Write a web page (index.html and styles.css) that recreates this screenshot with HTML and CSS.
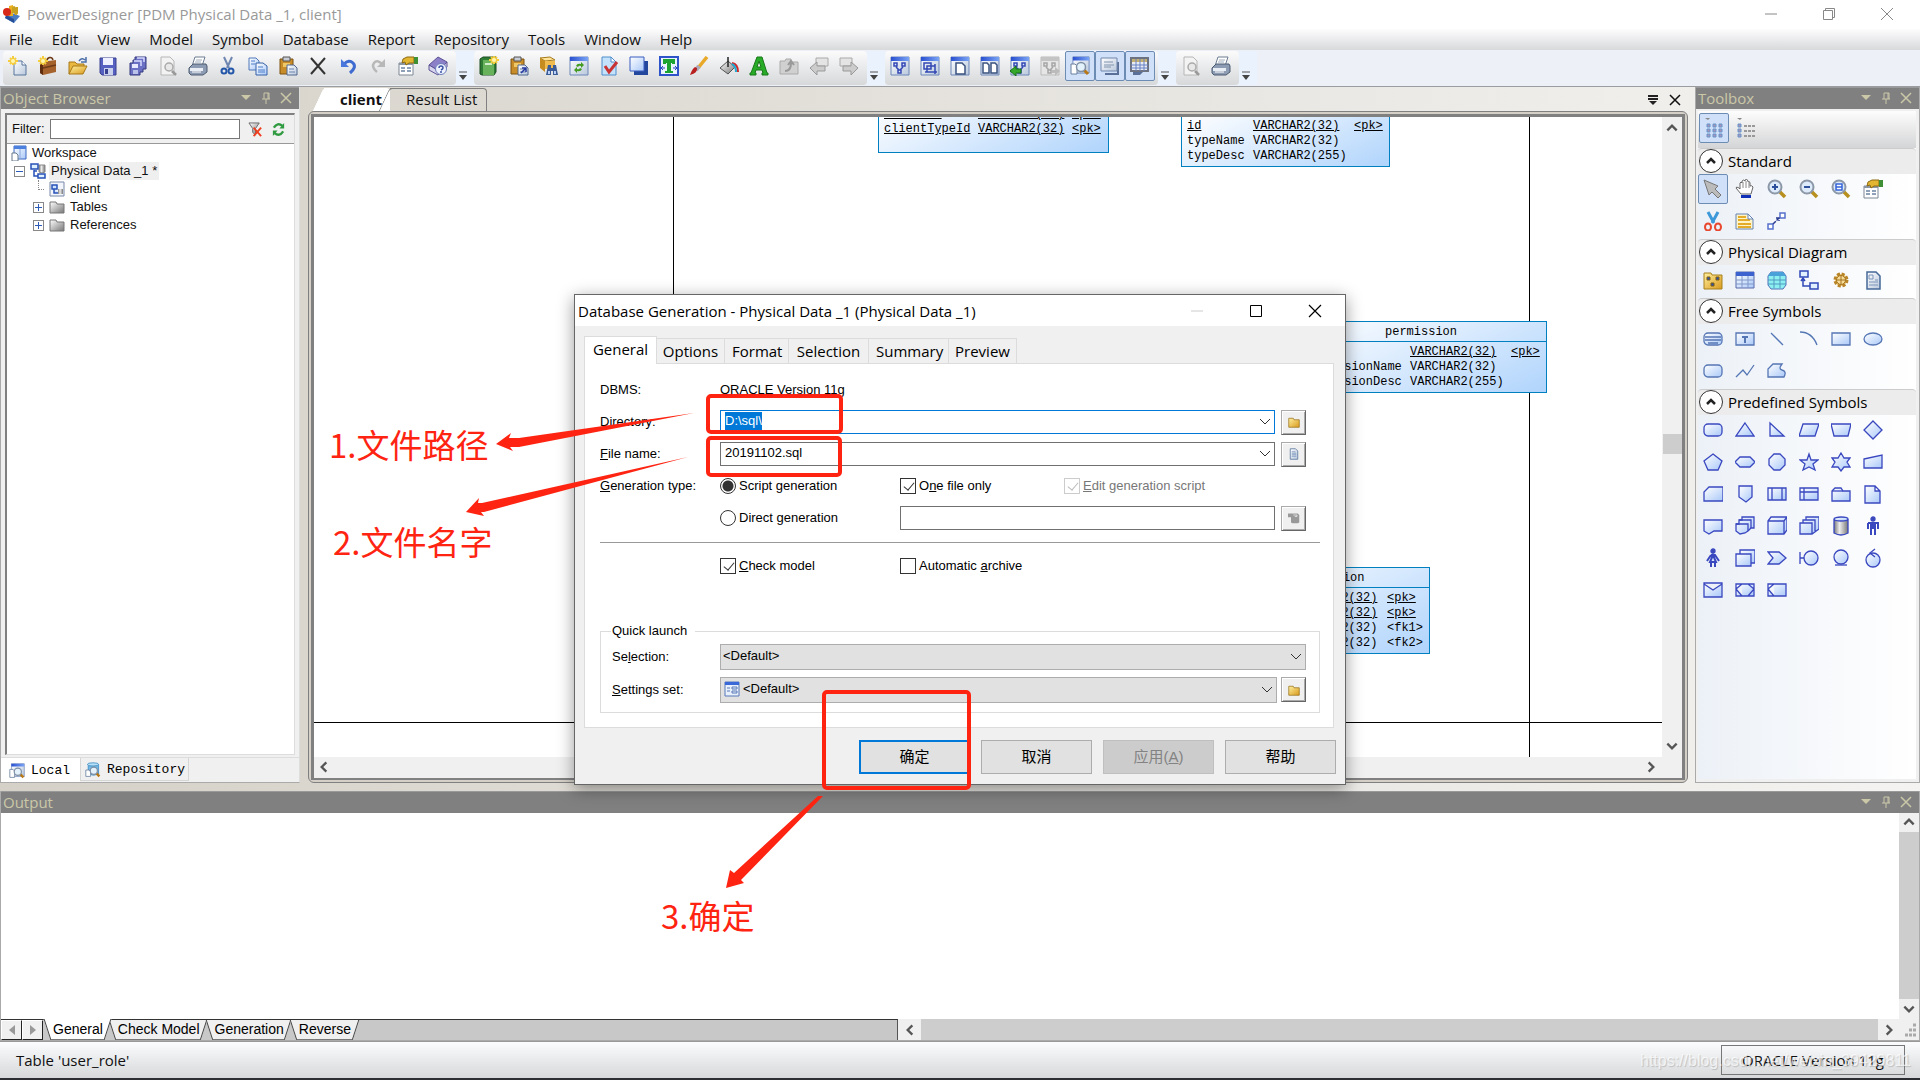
FILE: index.html
```html
<!DOCTYPE html>
<html lang="en">
<head>
<meta charset="utf-8">
<title>PowerDesigner [PDM Physical Data _1, client]</title>
<link rel="stylesheet" href="styles.css">
</head>
<body>
<svg class="sprite" aria-hidden="true">
  <defs>
    <linearGradient id="gBlue" x1="0" y1="0" x2="1" y2="1"><stop offset="0" stop-color="#fff"/><stop offset="1" stop-color="#a9c8f8"/></linearGradient>
    <linearGradient id="gPage" x1="0" y1="0" x2="1" y2="1"><stop offset="0" stop-color="#fff"/><stop offset="1" stop-color="#b9c8dc"/></linearGradient>
    <linearGradient id="gGold" x1="0" y1="0" x2="1" y2="1"><stop offset="0" stop-color="#fff0a0"/><stop offset="1" stop-color="#d99a1c"/></linearGradient>
    <linearGradient id="gGrey" x1="0" y1="0" x2="1" y2="1"><stop offset="0" stop-color="#fff"/><stop offset="1" stop-color="#777"/></linearGradient>
    <linearGradient id="gCyl" x1="0" y1="0" x2="1" y2="0"><stop offset="0" stop-color="#777"/><stop offset=".4" stop-color="#eee"/><stop offset="1" stop-color="#777"/></linearGradient>
    <linearGradient id="gBar" x1="0" y1="0" x2="1" y2="0"><stop offset="0" stop-color="#2a50d0"/><stop offset="1" stop-color="#7aa4f4"/></linearGradient>
  </defs>
  <symbol id="spark" viewBox="0 0 20 20"><path d="M5 0v9M0 5h10M2 2l6 6M8 2L2 8" stroke="#f4cc3c" stroke-width="2"/><circle cx="5" cy="5" r="2" fill="#fff6b0"/></symbol>
  <symbol id="win" viewBox="0 0 20 20"><path d="M1 1h18v18H1z" fill="url(#gPage)" stroke="#6d87b8"/><path d="M1 1h18v4H1z" fill="url(#gBar)"/></symbol>
  <symbol id="lens" viewBox="0 0 20 20"><path d="M14 14l4 4" stroke="#b87818" stroke-width="3"/><circle cx="11" cy="11" r="4.500" fill="#e4f2fc" stroke="#7f8fa5" stroke-width="1.500"/></symbol>
  <symbol id="app" viewBox="0 0 20 20"><path d="M10 9l8 3-6 7-9-5z" fill="#4c7cc0"/><path d="M3 14l9 5v-4l-8-4z" fill="#274f98"/><path d="M7 2l4-1v11H7z" fill="#e8b020"/><path d="M11 9V4q1-2 2 0v5q1 2 2 0V3" fill="none" stroke="#c8a020" stroke-width="2"/><circle cx="5" cy="8" r="4" fill="#d82818"/></symbol>
  <symbol id="new" viewBox="0 0 20 20"><path d="M6 5h8l4 4v10H6z" fill="url(#gPage)" stroke="#56749c"/><path d="M14 5v4h4" fill="#fff" stroke="#56749c"/><use href="#spark"/></symbol>
  <symbol id="case" viewBox="0 0 20 20"><path d="M2 6l16-2v12l-13 3-3-2z" fill="#a5622c"/><path d="M2 7l3 2v10l-3-2z" fill="#5f2e10"/><path d="M9 5c0-4 5-5 6-1M5 12l13-3" stroke="#6e3a18" stroke-width="1.500" fill="none"/><use href="#spark"/></symbol>
  <symbol id="open" viewBox="0 0 20 20"><path d="M1 18V6h6l2 2h7v3z" fill="#e8b840" stroke="#a87818"/><path d="M1 18l4-8h14l-4 8z" fill="url(#gGold)" stroke="#a87818"/><path d="M11 5q3-4 6-1m1-3v5h-5" stroke="#4a6ea8" stroke-width="1.500" fill="none"/></symbol>
  <symbol id="save" viewBox="0 0 20 20"><path d="M2 2h16v17H4l-2-2z" fill="#5560c0" stroke="#3a4090"/><path d="M5 2h10v7H5z" fill="#eef0ff"/><path d="M6 12h9v7H6z" fill="#c8d0ec"/><path d="M7 13h3v5H7z" fill="#3a4090"/></symbol>
  <symbol id="saveall" viewBox="0 0 20 20"><path d="M7 1h11v12h-3v3h-3v3H2V7h3V4h2z" fill="#6a70c4" stroke="#34397f"/><path d="M9 2h7v4M6 5h7v5" fill="none" stroke="#d6daff" stroke-width="1.500"/><path d="M4 8h6v4H4z" fill="#e6e8ff"/><path d="M5 14h5v4H5z" fill="#bac2ea"/></symbol>
  <symbol id="preview" viewBox="0 0 20 20"><path d="M3 1h9l4 4v14H3z" fill="#f3f3f3" stroke="#b6b6b6"/><path d="M14 15l4 4" stroke="#999" stroke-width="2.500"/><circle cx="11" cy="11" r="4" fill="#e8e8e8" stroke="#aaa" stroke-width="1.500"/></symbol>
  <symbol id="print" viewBox="0 0 20 20"><path d="M7 1h10l-3 9H4z" fill="#fff" stroke="#6c7c90"/><path d="M8 4h6M7 6h6" stroke="#a0acba"/><path d="M1 12l4-4h13l1 2v6l-4 3H3l-2-2z" fill="#8d9cb2" stroke="#4a5a70"/><path d="M2 12h13v3H2z" fill="#e9eef5"/><path d="M4 16h9" stroke="#fff"/></symbol>
  <symbol id="cut" viewBox="0 0 20 20"><path d="M6 1l5 11M14 1L9 12" stroke="#6f87b0" stroke-width="2" fill="none"/><circle cx="6" cy="15" r="2.500" fill="none" stroke="#2457a8" stroke-width="2"/><circle cx="13" cy="15" r="2.500" fill="none" stroke="#2457a8" stroke-width="2"/></symbol>
  <symbol id="copy" viewBox="0 0 20 20"><path d="M1 2h7l3 3v9H1z" fill="url(#gBlue)" stroke="#5078b8"/><path d="M8 7h7l4 3v9H8z" fill="url(#gBlue)" stroke="#3460a8"/><path d="M3 5h4M3 8h4M10 11h5M10 14h7M10 16h7" stroke="#4a7cc8"/></symbol>
  <symbol id="paste" viewBox="0 0 20 20"><path d="M2 3h13v15H2z" fill="#c88c28" stroke="#7d5310"/><path d="M5 1h7v4H5z" fill="#c8ccd4" stroke="#555"/><path d="M5 7h7v4H5z" fill="#efc868"/><path d="M9 9h7l3 3v7H9z" fill="url(#gPage)" stroke="#506890"/><path d="M11 13h5M11 16h6" stroke="#6a83b0"/></symbol>
  <symbol id="del" viewBox="0 0 20 20"><path d="M3 2l14 16M17 2L3 18" stroke="#333" stroke-width="2"/></symbol>
  <symbol id="undo" viewBox="0 0 20 20"><path d="M6 8q5-5 9-1t-3 10" fill="none" stroke="#3f6cd0" stroke-width="3"/><path d="M3 3v8h8z" fill="#4a78dc"/></symbol>
  <symbol id="redo" viewBox="0 0 20 20"><path d="M14 8Q9 3 6 7t3 9" fill="none" stroke="#b8b8b8" stroke-width="2.500"/><path d="M17 3v8H9z" fill="#b8b8b8"/></symbol>
  <symbol id="props" viewBox="0 0 20 20"><path d="M1 7h14v12H1z" fill="#fff" stroke="#7d8794"/><path d="M1 7h14v2H1z" fill="#8b97a5"/><path d="M3 12h4M3 15h4M9 12h4M9 15h4" stroke="#8fa1b8" stroke-width="2"/><path d="M5 3l4-2h7v6h-5L8 9 7 6 4 7z" fill="#e2b630" stroke="#8c6a10"/><path d="M16 1h4v7h-4z" fill="#3f8f35"/></symbol>
  <symbol id="help" viewBox="0 0 20 20"><path d="M1 9l9-8 9 5-8 9z" fill="#8c80c8" stroke="#5d5295"/><path d="M1 9v5l9 5 9-8V6l-8 9z" fill="#d7d4ee" stroke="#5d5295"/><circle cx="13" cy="13" r="5.500" fill="#eef2ff" stroke="#6d7fb8"/><path d="M11 12q0-2 2-2t2 2q0 1-2 2m0 1v2" fill="none" stroke="#3c54a4" stroke-width="1.500"/></symbol>
  <symbol id="book" viewBox="0 0 20 20"><path d="M1 3l3-2h13v15l-2 3H3l-2-1z" fill="#2f7d35" stroke="#1d4f25"/><path d="M4 4h11v15H4z" fill="#69b25c"/><path d="M6 7h7v2H6z" fill="#d0ecc8"/><svg x="10" y="-1" width="20" height="20"><use href="#spark"/></svg></symbol>
  <symbol id="pasteArrow" viewBox="0 0 20 20"><use href="#paste"/><path d="M12 17l5-5m0 4v-4h-4" stroke="#2438a0" stroke-width="1.500" fill="none"/></symbol>
  <symbol id="find" viewBox="0 0 20 20"><path d="M1 2l10-1 5 3-10 1z" fill="#ffe49a" stroke="#a67a1c"/><path d="M1 2l5 3v11l-5-4z" fill="#c68c20"/><path d="M6 5h10v8H6z" fill="#f0bc50"/><path d="M9 9h3v3h2V9h3l2 10h-5v-4h-2v4H7z" fill="#3c5c98"/><path d="M9 15h2v3H9zM15 15h2v3h-2z" fill="#b8d0f8"/></symbol>
  <symbol id="refreshWin" viewBox="0 0 20 20"><use href="#win"/><path d="M7 10q1-3 5-2V6l3 3-3 3v-2q-2-1-3 1zM13 13q-1 3-5 2v2l-3-3 3-3v2q2 1 3-1z" fill="#449b22"/></symbol>
  <symbol id="check" viewBox="0 0 20 20"><path d="M3 1h9l5 5v13H3z" fill="#c4e2fb" stroke="#4e8ecc"/><path d="M12 1v5h5z" fill="#fff" stroke="#4e8ecc"/><path d="M6 10l4 6 8-10" fill="none" stroke="#c83434" stroke-width="3"/></symbol>
  <symbol id="shadow" viewBox="0 0 20 20"><path d="M5 5h14v14H5z" fill="#23479c"/><path d="M1 1h14v14H1z" fill="url(#gBlue)" stroke="#3a5fc0"/></symbol>
  <symbol id="fitText" viewBox="0 0 20 20"><path d="M1 1h18v18H1z" fill="#eaf4ff" stroke="#2f53c8" stroke-width="2"/><path d="M4 3h12v5h-3V7h-1v8h2v2H6v-2h2V7H7v1H4z" fill="#1da332"/><path d="M2 12h4M14 12h4M4 10l-2 2 2 2M16 10l2 2-2 2" stroke="#2746c0" fill="none"/></symbol>
  <symbol id="brush" viewBox="0 0 20 20"><path d="M18 1l-9 11" stroke="#e8a828" stroke-width="3.500"/><path d="M10 10l-3 4" stroke="#aab" stroke-width="4"/><path d="M8 12q1 5-7 7 2-6 5-8z" fill="#b82020"/></symbol>
  <symbol id="bucket" viewBox="0 0 20 20"><path d="M1 12l8-7 7 6-7 7z" fill="url(#gGrey)" stroke="#555"/><path d="M9 11V1" stroke="#222" stroke-width="1.500"/><path d="M13 7q6 1 6 9" stroke="#d02828" stroke-width="2" fill="none"/><path d="M13 8q4 2 4 8" stroke="#20a8d0" stroke-width="2" fill="none"/></symbol>
  <symbol id="fontA" viewBox="0 0 20 20"><path d="M8 1h5l5 16h1v2h-6v-2h1l-1-3H7l-1 3h1v2H1v-2h1zM10 5l-2 6h4z" fill="#28ac28" stroke="#187818" fill-rule="evenodd"/></symbol>
  <symbol id="upFolder" viewBox="0 0 20 20"><path d="M1 5h5l1-2h5v3h7v12H1z" fill="#d0d0d0" stroke="#aaa"/><path d="M6 15q6 0 6-8m-3 2l3-4 3 4" fill="none" stroke="#999" stroke-width="2"/></symbol>
  <symbol id="backG" viewBox="0 0 20 20"><path d="M7 2h12v8H7z" fill="#e4e4e4" stroke="#aaa"/><path d="M1 12l7-6v4h8v5H8v4z" fill="#ccc" stroke="#999"/></symbol>
  <symbol id="fwdG" viewBox="0 0 20 20"><path d="M1 2h12v8H1z" fill="#e4e4e4" stroke="#aaa"/><path d="M19 12l-7-6v4H4v5h8v4z" fill="#ccc" stroke="#999"/></symbol>
  <symbol id="dgm" viewBox="0 0 20 20"><use href="#win"/><path d="M4 7h3v3H4zM12 7h3v3h-3zM8 14h3v3H8zM6 11l3 3M13 11l-3 3" fill="#dce6ff" stroke="#3348b4" stroke-width="1.500"/></symbol>
  <symbol id="sel" viewBox="0 0 20 20"><use href="#win"/><path d="M4 7h7v6H4zM7 10h8v6H7zM5 16h12M15 8v10" fill="none" stroke="#3348b4" stroke-width="1.500"/></symbol>
  <symbol id="page1" viewBox="0 0 20 20"><use href="#win"/><path d="M6 7h6l3 3v8H6z" fill="#fff" stroke="#3b5380" stroke-width="1.500"/></symbol>
  <symbol id="page2" viewBox="0 0 20 20"><use href="#win"/><path d="M3 7h4l2 2v8H3zM11 7h4l2 2v8h-6z" fill="#fff" stroke="#3b5380" stroke-width="1.500"/></symbol>
  <symbol id="dgmBack" viewBox="0 0 20 20"><use href="#dgm"/><path d="M0 15l6-5v3h5v4H6v3z" fill="#35a82c" stroke="#167018"/></symbol>
  <symbol id="dgmFwd" viewBox="0 0 20 20"><path d="M1 1h18v18H1z" fill="#e6e6e6" stroke="#bbb"/><path d="M1 1h18v4H1z" fill="#c4c4c4"/><path d="M4 7h3v3H4zM12 7h3v3h-3zM8 14h3v3H8zM6 11l3 3M13 11l-3 3" fill="none" stroke="#a5a5a5" stroke-width="1.500"/><path d="M20 15l-5-4v3h-3v3h3v3z" fill="#bbb"/></symbol>
  <symbol id="browse" viewBox="0 0 20 20"><svg x="2" width="18" height="18"><use href="#win"/></svg><path d="M1 8h4l2 2v8H1z" fill="#fff" stroke="#6880a0"/><use href="#lens"/></symbol>
  <symbol id="outwin" viewBox="0 0 20 20"><path d="M5 17h12V6h2v13H5z" fill="#5a7098"/><path d="M1 2h16v13H1z" fill="url(#gPage)" stroke="#7087ac"/><path d="M4 6h9M4 9h10M4 11h7" stroke="#8294ae"/></symbol>
  <symbol id="gridwin" viewBox="0 0 20 20"><path d="M3 16h10l-3 3H3z" fill="#5a7098"/><path d="M1 2h17v13H1z" fill="#e8ecf2" stroke="#6c7280" stroke-width="2"/><path d="M2 3h15v3H2z" fill="#c4b070"/><path d="M1 9h17M1 12h17M6 3v12M10 3v12M14 3v12" stroke="#6780c8"/></symbol>
  <symbol id="ovf" viewBox="0 0 10 10"><path d="M1 1h8" stroke="#555"/><path d="M1 4h8L5 9z" fill="#444"/></symbol>
  <symbol id="tri" viewBox="0 0 12 12"><path d="M1 3h10L6 8z" fill="currentColor"/></symbol>
  <symbol id="pin" viewBox="0 0 12 12"><path d="M4 1h5v6M4 1v6M2 7h8M6 7v5M8 1v6" fill="none" stroke="currentColor"/></symbol>
  <symbol id="x" viewBox="0 0 12 12"><path d="M1 1l10 10M11 1L1 11" stroke="currentColor" stroke-width="1.500"/></symbol>
  <symbol id="up" viewBox="0 0 12 12"><path d="M2 8l4-4 4 4" fill="none" stroke="currentColor" stroke-width="2"/></symbol>
  <symbol id="down" viewBox="0 0 12 12"><path d="M2 4l4 4 4-4" fill="none" stroke="currentColor" stroke-width="2"/></symbol>
  <symbol id="drop" viewBox="0 0 12 12"><path d="M1 4l5 5 5-5" fill="none" stroke="currentColor"/></symbol>
  <symbol id="left" viewBox="0 0 12 12"><path d="M8 2L4 6l4 4" fill="none" stroke="currentColor" stroke-width="2"/></symbol>
  <symbol id="right" viewBox="0 0 12 12"><path d="M4 2l4 4-4 4" fill="none" stroke="currentColor" stroke-width="2"/></symbol>
  <symbol id="nofilter" viewBox="0 0 16 16"><path d="M1 1h11L8 7v7l-3-3V7z" fill="url(#gGrey)" stroke="#666"/><path d="M6 6l8 9M14 6l-8 9" stroke="#ee4020" stroke-width="2"/></symbol>
  <symbol id="refresh" viewBox="0 0 16 16"><path d="M3 6q4-6 9-2M13 10q-4 6-9 2" fill="none" stroke="#2f9a40" stroke-width="2.500"/><path d="M14 1v6H9zM2 15V9h5z" fill="#2f9a40"/></symbol>
  <symbol id="workspace" viewBox="0 0 16 16"><path d="M3 1h12v13H3z" fill="url(#gBlue)" stroke="#3a68c0"/><path d="M3 1h12v3H3z" fill="#4b80de"/><path d="M9 4v10" stroke="#88a8dc"/><path d="M1 8h4l2 2v6H1z" fill="#fff" stroke="#66788c"/></symbol>
  <symbol id="pdm" viewBox="0 0 16 16"><path d="M9 2v7q3 2 6 0V2z" fill="url(#gCyl)" stroke="#888"/><path d="M1 1h7v5H1zM8 11h7v4H8z" fill="#dff0ff" stroke="#2750b8" stroke-width="1.500"/><path d="M4 7v6h4M4 8h3" fill="none" stroke="#2750b8" stroke-width="1.500"/></symbol>
  <symbol id="dgmSmall" viewBox="0 0 16 16"><path d="M1 1h14v14H1z" fill="#f2f6fc" stroke="#7888a8"/><path d="M3 4h5v4H3zM5 8v4h5" fill="#cfe2ff" stroke="#2750b8" stroke-width="1.500"/><path d="M9 8h5v5H9z" fill="url(#gCyl)"/></symbol>
  <symbol id="folderG" viewBox="0 0 16 16"><path d="M1 3h6l1 2h7v9H1z" fill="url(#gGrey)" stroke="#777"/></symbol>
  <symbol id="repo" viewBox="0 0 20 20"><path d="M4 3v12q7 3 13 0V3z" fill="#6fb8e4" stroke="#3c88c0"/><ellipse cx="10" cy="3" rx="7" ry="2" fill="#b6e0f8" stroke="#3c88c0"/><path d="M1 10h4l2 2v6H1z" fill="#fff" stroke="#6880a0"/><use href="#lens"/></symbol>
  <symbol id="folderY" viewBox="0 0 16 16"><path d="M1 3h6l1 2h7v10H1z" fill="url(#gGold)" stroke="#95701c"/></symbol>
  <symbol id="docS" viewBox="0 0 16 16"><path d="M3 1h7l3 3v11H3z" fill="url(#gPage)" stroke="#4c6b96"/><path d="M5 5h5M5 7h6M5 9h6M5 11h6" stroke="#6f8db8"/></symbol>
  <symbol id="dbG" viewBox="0 0 16 16"><path d="M0 2h13l2 2v10l-2 1H6l-2-1V7H0z" fill="#999"/><path d="M7 4h5v2H9" fill="none" stroke="#eee"/></symbol>
  <symbol id="viewGrid" viewBox="0 0 20 20"><path d="M1 0h5L4 2z" fill="#888"/><path d="M3 6h3v3H3zM9 6h3v3H9zM15 6h3v3h-3zM3 11h3v3H3zM9 11h3v3H9zM15 11h3v3h-3zM3 16h3v3H3zM9 16h3v3H9zM15 16h3v3h-3z" fill="#a993b8" stroke="#6696cc"/></symbol>
  <symbol id="viewList" viewBox="0 0 20 20"><path d="M1 0h5L4 2z" fill="#888"/><path d="M2 6h3v3H2zM2 11h3v3H2zM2 16h3v3H2z" fill="#a993b8" stroke="#6696cc"/><path d="M8 8h12M8 13h12M8 18h12" stroke="#999" stroke-dasharray="3 1" stroke-width="2"/></symbol>
  <symbol id="chev" viewBox="0 0 24 24"><circle cx="12" cy="12" r="11.500" fill="#fff" stroke="#333"/><path d="M8 14l4-4 4 4" fill="none" stroke="#222" stroke-width="2.500"/></symbol>
  <symbol id="pointer" viewBox="0 0 20 20"><path d="M1 1l14 6-3 3 6 6-3 3-6-6-3 3z" fill="#bbb" stroke="#777"/></symbol>
  <symbol id="hand" viewBox="0 0 20 20"><path d="M6 15l-5-6q0-2 3 0l1 1V4q1-2 2 0V2q2-2 3 0V1q2-2 3 1v1q2-1 2 1v3q2-1 3 1l-2 7z" fill="#fff" stroke="#666"/><path d="M8 3v6M11 2v7M14 4v5" stroke="#888"/><path d="M6 16h10v3H6z" fill="#1030b8"/></symbol>
  <symbol id="zoom" viewBox="0 0 20 20"><path d="M12 12l6 6" stroke="#b89020" stroke-width="3.500"/><circle cx="8" cy="8" r="6.500" fill="#dceafa" stroke="#8c98a8" stroke-width="2"/></symbol>
  <symbol id="zin" viewBox="0 0 20 20"><use href="#zoom"/><path d="M5 8h6M8 5v6" stroke="#2c509c" stroke-width="2"/></symbol>
  <symbol id="zout" viewBox="0 0 20 20"><use href="#zoom"/><path d="M5 8h6" stroke="#2c509c" stroke-width="2"/></symbol>
  <symbol id="zfit" viewBox="0 0 20 20"><use href="#zoom"/><path d="M5 5h6v6H5zM5 8h6" fill="#fff" stroke="#3464d8" stroke-width="1.500"/></symbol>
  <symbol id="cutc" viewBox="0 0 20 20"><path d="M5 1l6 11M15 1L9 12" stroke="#3c98d8" stroke-width="3"/><ellipse cx="5" cy="16" rx="3" ry="3.500" fill="none" stroke="#e84830" stroke-width="2"/><ellipse cx="15" cy="16" rx="3" ry="3.500" fill="none" stroke="#e84830" stroke-width="2"/></symbol>
  <symbol id="note" viewBox="0 0 20 20"><path d="M1 3h12l5 5v10H1z" fill="#fff4c8" stroke="#6482b4"/><path d="M3 6h8M3 9h12M3 13h13M3 16h13" stroke="#e4ac28" stroke-width="2"/><path d="M13 3v5h5z" fill="#fff" stroke="#6482b4"/></symbol>
  <symbol id="link" viewBox="0 0 20 20"><path d="M1 13h5v5H1zM13 2h5v5h-5z" fill="#fff" stroke="#5570cc" stroke-width="1.500"/><path d="M6 13l6-6M9 7h3v3" stroke="#2c3c90" stroke-width="1.500" fill="none" stroke-dasharray="4 1"/></symbol>
  <symbol id="pkg" viewBox="0 0 20 20"><path d="M1 3h7l1 2h10v14H1z" fill="url(#gGold)" stroke="#a8801c"/><path d="M4 7h3v3H4zM13 7h3v3h-3zM8 13h3v3H8z" fill="#2850b8" stroke="#806010"/></symbol>
  <symbol id="tbl" viewBox="0 0 20 20"><path d="M1 2h18v16H1z" fill="url(#gBlue)" stroke="#5868a8"/><path d="M1 2h18v4H1z" fill="#3c62d0"/><path d="M1 10h18M1 14h18M7 6v12M13 6v12" stroke="#8098c8"/></symbol>
  <symbol id="view" viewBox="0 0 20 20"><path d="M4 2h12l3 4v9l-3 4H4l-3-4V6z" fill="#8cf0f0" stroke="#5070b8"/><path d="M4 2h12l3 4H1z" fill="#4aa0d8"/><path d="M1 10h18M1 14h18M7 6v12M13 6v12" stroke="#5098c0"/></symbol>
  <symbol id="ref" viewBox="0 0 20 20"><path d="M1 1h8v6H1zM11 13h8v6h-8z" fill="#e0f0ff" stroke="#3048b8" stroke-width="1.500"/><path d="M4 8v8h7M2 11l2-3 2 3" stroke="#3048b8" stroke-width="1.500" fill="none"/></symbol>
  <symbol id="gear" viewBox="0 0 20 20"><circle cx="10" cy="10" r="6" fill="#f0c468" stroke="#b88428" stroke-width="3" stroke-dasharray="3 1.700"/><circle cx="10" cy="10" r="4.500" fill="#f8dc98" stroke="#a47420"/><path d="M10 6v8M6 10h8" stroke="#a47420"/></symbol>
  <symbol id="file" viewBox="0 0 20 20"><path d="M4 2h9l4 4v13H4z" fill="url(#gPage)" stroke="#456898" stroke-width="1.500"/><path d="M6 5h4v4H6zM12 10h3M6 12h9M6 15h9" stroke="#7c94b8" fill="none"/></symbol>
  <symbol id="title" viewBox="0 0 20 20"><rect x="1" y="4" width="18" height="12" rx="4"/><path d="M2 8h16M2 11h16M5 14h10"/></symbol>
  <symbol id="textb" viewBox="0 0 20 20"><path d="M1 4h18v12H1z"/><path d="M7 8h6M10 8v6" stroke-width="2"/></symbol>
  <symbol id="line" viewBox="0 0 20 20"><path d="M4 4l12 12"/></symbol>
  <symbol id="arc" viewBox="0 0 20 20"><path d="M1 3q12 0 17 13" fill="none"/></symbol>
  <symbol id="rect" viewBox="0 0 20 20"><path d="M1 4h18v12H1z"/></symbol>
  <symbol id="oval" viewBox="0 0 20 20"><ellipse cx="10" cy="10" rx="9" ry="6"/></symbol>
  <symbol id="rrect" viewBox="0 0 20 20"><rect x="1" y="4" width="18" height="12" rx="4"/></symbol>
  <symbol id="poly" viewBox="0 0 20 20"><path d="M1 16l7-7 4 5 7-10" fill="none"/></symbol>
  <symbol id="shape" viewBox="0 0 20 20"><path d="M1 16V8l5-5h9q-4 5 0 6 5 1 2 7z"/></symbol>
  <symbol id="triS" viewBox="0 0 20 20"><path d="M10 3l9 13H1z"/></symbol>
  <symbol id="rtri" viewBox="0 0 20 20"><path d="M3 3l14 13H3z"/></symbol>
  <symbol id="para" viewBox="0 0 20 20"><path d="M4 4h16l-4 12H0z"/></symbol>
  <symbol id="trap" viewBox="0 0 20 20"><path d="M0 4h20l-3 12H3z"/></symbol>
  <symbol id="diam" viewBox="0 0 20 20"><path d="M10 1l9 9-9 9-9-9z"/></symbol>
  <symbol id="pent" viewBox="0 0 20 20"><path d="M10 2l9 7-4 9H5L1 9z"/></symbol>
  <symbol id="hex" viewBox="0 0 20 20"><path d="M0 10l5-5h10l5 5-5 5H5z"/></symbol>
  <symbol id="oct" viewBox="0 0 20 20"><path d="M7 2h6l5 5v6l-5 5H7l-5-5V7z"/></symbol>
  <symbol id="star5" viewBox="0 0 20 20"><path d="M10 2l2 6h7l-5 4 2 6-6-3-6 3 2-6-5-4h7z"/></symbol>
  <symbol id="star6" viewBox="0 0 20 20"><path d="M10 1l3 5h6l-3 4 3 5h-6l-3 4-3-4H1l3-5-3-4h6z"/></symbol>
  <symbol id="manual" viewBox="0 0 20 20"><path d="M1 7l18-4v13H1z"/></symbol>
  <symbol id="card" viewBox="0 0 20 20"><path d="M6 3h14v14H1V8z"/></symbol>
  <symbol id="offp" viewBox="0 0 20 20"><path d="M4 2h13v11l-6 5-7-5z"/></symbol>
  <symbol id="proc" viewBox="0 0 20 20"><path d="M1 4h18v12H1zM5 4v12M15 4v12"/></symbol>
  <symbol id="intern" viewBox="0 0 20 20"><path d="M1 4h18v12H1zM1 8h18M5 4v12"/></symbol>
  <symbol id="pack" viewBox="0 0 20 20"><path d="M1 7l3-3h6l2 3h7v10H1z"/><path d="M1 7h11" /></symbol>
  <symbol id="doc" viewBox="0 0 20 20"><path d="M2 2h10l5 5v12H2zM12 2v5h5"/></symbol>
  <symbol id="wave" viewBox="0 0 20 20"><path d="M1 4h18v11h-8l-5 3-5-3z"/></symbol>
  <symbol id="waves" viewBox="0 0 20 20"><path d="M7 1h12v11h-3l-3 3-3 2-5 1-4-3V8h3V4h3z"/><path d="M1 8h12v7M4 4h12v8" fill="none"/></symbol>
  <symbol id="cube" viewBox="0 0 20 20"><path d="M1 5l3-4h16v13l-3 4H1zM1 5h16v13M17 5l3-4"/></symbol>
  <symbol id="cubes" viewBox="0 0 20 20"><path d="M7 1h13v12l-7 5H1V7h3V4h3zM1 7h12v11M4 4h12v11"/></symbol>
  <symbol id="cyl" viewBox="0 0 20 20"><path d="M3 4v13q7 4 14 0V4z" fill="url(#gCyl)"/><ellipse cx="10" cy="3" rx="7" ry="2"/></symbol>
  <symbol id="man" viewBox="0 0 20 20"><circle cx="10" cy="3" r="2" fill="#3a48b8"/><path d="M5 7h10v6M5 7v6M8 7v12M12 7v12M10 7v6" fill="none" stroke-width="2"/></symbol>
  <symbol id="woman" viewBox="0 0 20 20"><circle cx="10" cy="3" r="2" fill="#3a48b8"/><path d="M8 7h4l4 6M8 7l-4 6M10 7l-3 7h6zM8 14v5M12 14v5" stroke-width="2"/></symbol>
  <symbol id="multi" viewBox="0 0 20 20"><path d="M5 2h15v13H5z"/><path d="M1 6h15v12H1z"/></symbol>
  <symbol id="chevS" viewBox="0 0 20 20"><path d="M1 4h11l7 6-7 6H1l5-6z"/></symbol>
  <symbol id="bound" viewBox="0 0 20 20"><path d="M1 4v12M1 10h5"/><circle cx="12" cy="10" r="7"/></symbol>
  <symbol id="entity" viewBox="0 0 20 20"><circle cx="10" cy="9" r="7"/><path d="M4 17h12"/></symbol>
  <symbol id="ctrl" viewBox="0 0 20 20"><circle cx="10" cy="12" r="7"/><path d="M12 1L7 5l5 4" fill="none"/></symbol>
  <symbol id="mail" viewBox="0 0 20 20"><path d="M1 3h18v14H1zM1 4l9 6 9-6"/></symbol>
  <symbol id="mail2" viewBox="0 0 20 20"><path d="M1 4h18v12H1zM7 4l-6 5 6 7M13 4l6 5-6 7"/></symbol>
  <symbol id="mail3" viewBox="0 0 20 20"><path d="M1 4h18v12H1zM7 4l-6 5 6 7"/></symbol>
</svg>

<header class="titlebar">
  <svg class="i20"><use href="#app"/></svg>
  <h1>PowerDesigner [PDM Physical Data _1, client]</h1>
  <div class="winbtns">
    <button aria-label="Minimize"><svg viewBox="0 0 12 12"><path d="M0 6h12" stroke="#888"/></svg></button>
    <button aria-label="Restore"><svg viewBox="0 0 12 12"><path d="M.5 2.500h9v9h-9zM2.500 2V.5h9v9H10" fill="none" stroke="#888"/></svg></button>
    <button aria-label="Close"><svg viewBox="0 0 12 12"><path d="M0 0l12 12M12 0L0 12" stroke="#888"/></svg></button>
  </div>
</header>
<nav class="menubar">
  <button>File</button><button>Edit</button><button>View</button><button>Model</button><button>Symbol</button><button>Database</button><button>Report</button><button>Repository</button><button>Tools</button><button>Window</button><button>Help</button>
</nav>
<div class="toolbar">
  <div class="group">
    <button aria-label="New"><svg><use href="#new"/></svg></button><button aria-label="New project"><svg><use href="#case"/></svg></button><button aria-label="Open"><svg><use href="#open"/></svg></button><button aria-label="Save"><svg><use href="#save"/></svg></button><button aria-label="Save all"><svg><use href="#saveall"/></svg></button><button aria-label="Print preview"><svg><use href="#preview"/></svg></button><button aria-label="Print"><svg><use href="#print"/></svg></button><button aria-label="Cut"><svg><use href="#cut"/></svg></button><button aria-label="Copy"><svg><use href="#copy"/></svg></button><button aria-label="Paste"><svg><use href="#paste"/></svg></button><button aria-label="Delete"><svg><use href="#del"/></svg></button><button aria-label="Undo"><svg><use href="#undo"/></svg></button><button aria-label="Redo"><svg><use href="#redo"/></svg></button><button aria-label="Properties"><svg><use href="#props"/></svg></button><button aria-label="Help"><svg><use href="#help"/></svg></button>
  </div>
  <button class="ovf" aria-label="More"><svg><use href="#ovf"/></svg></button>
  <div class="group">
    <button aria-label="New model"><svg><use href="#book"/></svg></button><button aria-label="Paste as shortcut"><svg><use href="#pasteArrow"/></svg></button><button aria-label="Find objects"><svg><use href="#find"/></svg></button><button aria-label="Refresh"><svg><use href="#refreshWin"/></svg></button><button aria-label="Check model"><svg><use href="#check"/></svg></button><button aria-label="Shadow"><svg><use href="#shadow"/></svg></button><button aria-label="Fit to text"><svg><use href="#fitText"/></svg></button><button aria-label="Line style"><svg><use href="#brush"/></svg></button><button aria-label="Fill"><svg><use href="#bucket"/></svg></button><button aria-label="Font"><svg><use href="#fontA"/></svg></button><button aria-label="Parent"><svg><use href="#upFolder"/></svg></button><button aria-label="Back"><svg><use href="#backG"/></svg></button><button aria-label="Forward"><svg><use href="#fwdG"/></svg></button>
  </div>
  <button class="ovf" aria-label="More"><svg><use href="#ovf"/></svg></button>
  <div class="group">
    <button aria-label="Diagram"><svg><use href="#dgm"/></svg></button><button aria-label="Select"><svg><use href="#sel"/></svg></button><button aria-label="One page"><svg><use href="#page1"/></svg></button><button aria-label="All pages"><svg><use href="#page2"/></svg></button><button aria-label="Previous view"><svg><use href="#dgmBack"/></svg></button><button aria-label="Next view"><svg><use href="#dgmFwd"/></svg></button><button class="on" aria-label="Browser"><svg><use href="#browse"/></svg></button><button class="on" aria-label="Output"><svg><use href="#outwin"/></svg></button><button class="on" aria-label="Result list"><svg><use href="#gridwin"/></svg></button>
  </div>
  <button class="ovf" aria-label="More"><svg><use href="#ovf"/></svg></button>
  <div class="group">
    <button aria-label="Page preview"><svg><use href="#preview"/></svg></button><button aria-label="Print diagram"><svg><use href="#print"/></svg></button>
  </div>
  <button class="ovf" aria-label="More"><svg><use href="#ovf"/></svg></button>
</div>

<main class="workspace">
  <aside class="pane browser">
    <div class="panehead"><h2>Object Browser</h2><svg><use href="#tri"/></svg><svg><use href="#pin"/></svg><svg><use href="#x"/></svg></div>
    <div class="treebox">
      <div class="filter"><label for="filter">Filter:</label><input id="filter" type="text"><svg><use href="#nofilter"/></svg><svg><use href="#refresh"/></svg></div>
      <ul class="tree">
        <li class="l0"><svg><use href="#workspace"/></svg><span>Workspace</span></li>
        <li class="l1"><i class="box minus"></i><svg><use href="#pdm"/></svg><span class="cur">Physical Data _1 *</span></li>
        <li class="l2"><i class="stub"></i><svg><use href="#dgmSmall"/></svg><span>client</span></li>
        <li class="l2"><i class="box plus"></i><svg><use href="#folderG"/></svg><span>Tables</span></li>
        <li class="l2"><i class="box plus"></i><svg><use href="#folderG"/></svg><span>References</span></li>
      </ul>
    </div>
    <div class="lefttabs"><button class="act"><svg><use href="#browse"/></svg>Local</button><button><svg><use href="#repo"/></svg>Repository</button></div>
  </aside>

  <section class="docarea">
    <div class="doctabs">
      <button class="doctab act">client</button><button class="doctab">Result List</button>
      <span class="grow"></span>
      <svg viewBox="0 0 12 12"><path d="M1 2h10M1 5h10" stroke="#222" stroke-width="2"/><path d="M2 7h8l-4 4z" fill="#222"/></svg>
      <svg><use href="#x"/></svg>
    </div>
    <div class="frame"><div class="frame-in">
      <div class="canvas">
        <div class="vline v1"></div><div class="vline v2"></div><div class="hline"></div>
        <div class="entity e1"><table><colgroup><col class="c94"><col class="c94"><col></colgroup><tr><td><u>clientId</u></td><td><u>VARCHAR2(32)</u></td><td><u>&lt;pk&gt;</u></td></tr><tr><td><u>clientTypeId</u></td><td><u>VARCHAR2(32)</u></td><td><u>&lt;pk&gt;</u></td></tr></table></div>
        <div class="entity e2"><table><colgroup><col class="c66"><col class="c101"><col></colgroup><tr><td><u>id</u></td><td><u>VARCHAR2(32)</u></td><td><u>&lt;pk&gt;</u></td></tr><tr><td>typeName</td><td>VARCHAR2(32)</td><td></td></tr><tr><td>typeDesc</td><td>VARCHAR2(255)</td><td></td></tr></table></div>
        <div class="entity e3"><h3>permission</h3><table><colgroup><col class="c109"><col class="c101"><col></colgroup><tr><td><u>id</u></td><td><u>VARCHAR2(32)</u></td><td><u>&lt;pk&gt;</u></td></tr><tr><td>permissionName</td><td>VARCHAR2(32)</td><td></td></tr><tr><td>permissionDesc</td><td>VARCHAR2(255)</td><td></td></tr></table></div>
        <div class="entity e4"><h3>role_permission</h3><table><colgroup><col class="c94"><col class="c96"><col></colgroup><tr><td><u>roleId</u></td><td><u>VARCHAR2(32)</u></td><td><u>&lt;pk&gt;</u></td></tr><tr><td><u>permissionId</u></td><td><u>VARCHAR2(32)</u></td><td><u>&lt;pk&gt;</u></td></tr><tr><td>rol_id</td><td>VARCHAR2(32)</td><td>&lt;fk1&gt;</td></tr><tr><td>per_id</td><td>VARCHAR2(32)</td><td>&lt;fk2&gt;</td></tr></table></div>
      </div>
      <div class="vscroll"><svg><use href="#up"/></svg><span class="thumb"></span><svg><use href="#down"/></svg></div>
      <div class="hscroll"><svg><use href="#left"/></svg><svg><use href="#right"/></svg></div>
    </div></div>
  </section>

  <aside class="pane toolbox">
    <div class="panehead"><h2>Toolbox</h2><svg><use href="#tri"/></svg><svg><use href="#pin"/></svg><svg><use href="#x"/></svg></div>
    <div class="tools">
      <div class="modes"><button class="on" aria-label="Icons"><svg><use href="#viewGrid"/></svg></button><button aria-label="List"><svg><use href="#viewList"/></svg></button></div>
      <h3><svg><use href="#chev"/></svg>Standard</h3>
      <div class="pal"><button class="on" aria-label="Pointer"><svg><use href="#pointer"/></svg></button><button aria-label="Grabber"><svg><use href="#hand"/></svg></button><button aria-label="Zoom in"><svg><use href="#zin"/></svg></button><button aria-label="Zoom out"><svg><use href="#zout"/></svg></button><button aria-label="Open diagram"><svg><use href="#zfit"/></svg></button><button aria-label="Properties"><svg><use href="#props"/></svg></button><button aria-label="Delete"><svg><use href="#cutc"/></svg></button><button aria-label="Note"><svg><use href="#note"/></svg></button><button aria-label="Link"><svg><use href="#link"/></svg></button></div>
      <h3><svg><use href="#chev"/></svg>Physical Diagram</h3>
      <div class="pal"><button aria-label="Package"><svg><use href="#pkg"/></svg></button><button aria-label="Table"><svg><use href="#tbl"/></svg></button><button aria-label="View"><svg><use href="#view"/></svg></button><button aria-label="Reference"><svg><use href="#ref"/></svg></button><button aria-label="Procedure"><svg><use href="#gear"/></svg></button><button aria-label="File"><svg><use href="#file"/></svg></button></div>
      <h3><svg><use href="#chev"/></svg>Free Symbols</h3>
      <div class="pal sym free"><button aria-label="Title"><svg><use href="#title"/></svg></button><button aria-label="Text"><svg><use href="#textb"/></svg></button><button aria-label="Line"><svg><use href="#line"/></svg></button><button aria-label="Arc"><svg><use href="#arc"/></svg></button><button aria-label="Rectangle"><svg><use href="#rect"/></svg></button><button aria-label="Ellipse"><svg><use href="#oval"/></svg></button><button aria-label="Rounded rectangle"><svg><use href="#rrect"/></svg></button><button aria-label="Polyline"><svg><use href="#poly"/></svg></button><button aria-label="Polygon"><svg><use href="#shape"/></svg></button></div>
      <h3><svg><use href="#chev"/></svg>Predefined Symbols</h3>
      <div class="pal sym"><button aria-label="Rounded"><svg><use href="#rrect"/></svg></button><button aria-label="Triangle"><svg><use href="#triS"/></svg></button><button aria-label="Right triangle"><svg><use href="#rtri"/></svg></button><button aria-label="Parallelogram"><svg><use href="#para"/></svg></button><button aria-label="Trapezoid"><svg><use href="#trap"/></svg></button><button aria-label="Diamond"><svg><use href="#diam"/></svg></button><button aria-label="Pentagon"><svg><use href="#pent"/></svg></button><button aria-label="Hexagon"><svg><use href="#hex"/></svg></button><button aria-label="Octagon"><svg><use href="#oct"/></svg></button><button aria-label="Star"><svg><use href="#star5"/></svg></button><button aria-label="Six-point star"><svg><use href="#star6"/></svg></button><button aria-label="Manual input"><svg><use href="#manual"/></svg></button><button aria-label="Card"><svg><use href="#card"/></svg></button><button aria-label="Off-page"><svg><use href="#offp"/></svg></button><button aria-label="Process"><svg><use href="#proc"/></svg></button><button aria-label="Internal storage"><svg><use href="#intern"/></svg></button><button aria-label="Package"><svg><use href="#pack"/></svg></button><button aria-label="Page"><svg><use href="#doc"/></svg></button><button aria-label="Document"><svg><use href="#wave"/></svg></button><button aria-label="Documents"><svg><use href="#waves"/></svg></button><button aria-label="Cube"><svg><use href="#cube"/></svg></button><button aria-label="Cubes"><svg><use href="#cubes"/></svg></button><button aria-label="Cylinder"><svg><use href="#cyl"/></svg></button><button aria-label="Man"><svg><use href="#man"/></svg></button><button aria-label="Woman"><svg><use href="#woman"/></svg></button><button aria-label="Multiple"><svg><use href="#multi"/></svg></button><button aria-label="Chevron"><svg><use href="#chevS"/></svg></button><button aria-label="Boundary"><svg><use href="#bound"/></svg></button><button aria-label="Entity"><svg><use href="#entity"/></svg></button><button aria-label="Control"><svg><use href="#ctrl"/></svg></button><button aria-label="Mail"><svg><use href="#mail"/></svg></button><button aria-label="Message in and out"><svg><use href="#mail2"/></svg></button><button aria-label="Message"><svg><use href="#mail3"/></svg></button></div>
    </div>
  </aside>
</main>

<section class="output">
  <div class="panehead"><h2>Output</h2><svg><use href="#tri"/></svg><svg><use href="#pin"/></svg><svg><use href="#x"/></svg></div>
  <div class="outbody"><div class="outtext"></div><div class="vscroll full"><svg><use href="#up"/></svg><span class="thumb"></span><svg><use href="#down"/></svg></div></div>
  <div class="outfoot">
    <div class="outtabs">
      <button class="nav" aria-label="Previous tab"><svg viewBox="0 0 12 12"><path d="M9 1v10L3 6z" fill="#999"/></svg></button><button class="nav" aria-label="Next tab"><svg viewBox="0 0 12 12"><path d="M3 1v10l6-5z" fill="#999"/></svg></button>
      <button class="otab act">General</button><button class="otab">Check Model</button><button class="otab">Generation</button><button class="otab">Reverse</button>
    </div>
    <div class="hscroll full"><svg><use href="#left"/></svg><span class="thumb"></span><svg><use href="#right"/></svg></div>
    <svg class="grip" viewBox="0 0 18 20"><path d="M12 6h3M8 11h3M12 11h3M4 16h3M8 16h3M12 16h3" stroke="#aaa" stroke-width="3"/></svg>
  </div>
</section>
<footer class="status"><span>Table 'user_role'</span><span class="dbms">ORACLE Version 11g</span><span class="mark">https://blog.csdn.net/weixin_39429811</span></footer>
<div class="taskedge"></div>

<form class="dialog" role="dialog" aria-labelledby="dlgtitle">
  <div class="dtitle"><h2 id="dlgtitle">Database Generation - Physical Data _1 (Physical Data _1)</h2>
    <svg viewBox="0 0 14 14"><path d="M1 7h12" stroke="#ccc"/></svg><svg viewBox="0 0 14 14"><path d="M1.500 1.500h11v11h-11z" fill="none" stroke="#000"/></svg><svg viewBox="0 0 14 14"><path d="M1 1l12 12M13 1L1 13" stroke="#000" stroke-width="1.200"/></svg></div>
  <div class="dtabs"><button type="button" class="act">General</button><button type="button">Options</button><button type="button">Format</button><button type="button">Selection</button><button type="button">Summary</button><button type="button">Preview</button></div>
  <div class="dpane">
    <div class="row"><span class="lab">DBMS:</span><span>ORACLE Version 11g</span></div>
    <div class="row"><label class="lab" for="dir"><u>D</u>irectory:</label><div class="combo focus"><input id="dir" type="text" value="D:\sql\"><svg><use href="#drop"/></svg></div><button type="button" class="sq" aria-label="Browse folder"><svg><use href="#folderY"/></svg></button></div>
    <div class="row"><label class="lab" for="fn"><u>F</u>ile name:</label><div class="combo"><input id="fn" type="text" value="20191102.sql"><svg><use href="#drop"/></svg></div><button type="button" class="sq" aria-label="Edit file"><svg><use href="#docS"/></svg></button></div>
    <div class="row"><span class="lab"><u>G</u>eneration type:</span><label class="w174"><input type="radio" name="gt" checked>Script generation</label><label class="w158"><input type="checkbox" checked><span>O<u>n</u>e file only</span></label><label class="dis"><input type="checkbox" checked disabled><span><u>E</u>dit generation script</span></label></div>
    <div class="row"><span class="lab"></span><label class="w174"><input type="radio" name="gt">Direct generation</label><div class="combo"><input type="text" aria-label="Connection"></div><button type="button" class="sq" aria-label="Connect"><svg><use href="#dbG"/></svg></button></div>
    <hr>
    <div class="row"><span class="lab"></span><label class="w174"><input type="checkbox" checked><span><u>C</u>heck model</span></label><label><input type="checkbox"><span>Automatic <u>a</u>rchive</span></label></div>
    <fieldset><legend>Quick launch</legend>
      <div class="row"><label class="lab2" for="ql">Se<u>l</u>ection:</label><div class="sel"><select id="ql"><option>&lt;Default&gt;</option></select><svg><use href="#drop"/></svg></div></div>
      <div class="row"><label class="lab2" for="ss"><u>S</u>ettings set:</label><div class="sel"><svg class="si" viewBox="0 0 16 16"><path d="M1 1h14v14H1z" fill="#e8f0fc" stroke="#5878b8"/><path d="M1 1h14v3H1z" fill="#3a68d8"/><path d="M3 7h3M3 10h3M8 6h5v2H8zM8 10h5v2H8z" fill="none" stroke="#5878b8"/></svg><select id="ss"><option>&lt;Default&gt;</option></select><svg><use href="#drop"/></svg></div><button type="button" class="sq" aria-label="Settings folder"><svg><use href="#folderY"/></svg></button></div>
    </fieldset>
  </div>
  <div class="dbtns"><button type="button" class="def">确定</button><button type="button">取消</button><button type="button" disabled>应用(<u>A</u>)</button><button type="button">帮助</button></div>
</form>

<div class="notes">
  <svg viewBox="0 0 1920 1080" width="1920" height="1080">
    <g fill="none" stroke="#ff2412" stroke-width="4"><rect x="708" y="396" width="133" height="36" rx="3"/><rect x="708" y="438" width="132" height="37" rx="3"/><rect x="824" y="692" width="145" height="96" rx="3"/></g>
    <g fill="#ff2412"><path d="M496 444l15-11-2 5 10 0 175-25-175 34-9 0 3 4z"/><path d="M466 512l13-14-1 5 4 0 206-46-204 55-3 0 3 4z"/><path d="M726 888l4-18 4 3 84-77h5l-82 84 3 3z"/></g>
  </svg>
  <p class="n1">1.文件路径</p><p class="n2">2.文件名字</p><p class="n3">3.确定</p>
</div>
<script src="main.js"></script>
</body>
</html>
```
FILE: main.js
```js
const dir = document.getElementById('dir');
dir.focus();
dir.select();
```
FILE: styles.css
```css
* { box-sizing: border-box; }
html, body { height: 100%; }
body { margin: 0; display: flex; flex-direction: column; min-height: 100vh; overflow: hidden; position: relative; font: 15px/20px "Open Sans", "Noto Sans", "Noto Sans CJK SC", sans-serif; color: #111; background: #d6d3cb; }
h1, h2, h3, p, ul { margin: 0; padding: 0; font-weight: normal; font-size: inherit; }
button { font: inherit; color: inherit; border: 0; background: none; padding: 0; margin: 0; }
svg { display: block; flex: none; }
.sprite { position: absolute; width: 0; height: 0; }
.grow { flex: 1; }

.titlebar { height: 29px; flex: none; display: flex; align-items: center; background: #fff; color: #999; padding: 0 4px 2px 2px; gap: 5px; }
.i20 { width: 20px; height: 20px; }
.titlebar h1 { flex: 1; }
.winbtns { display: flex; }
.winbtns button { width: 58px; display: flex; justify-content: center; }
.winbtns svg { width: 12px; height: 12px; }

.menubar { height: 21px; flex: none; display: flex; gap: 19px; padding: 0 0 2px 9px; background: linear-gradient(#fdfdfe, #d8d9db); }

.toolbar { height: 37px; flex: none; display: flex; background: #edf0f6; border-bottom: 1px solid #999ca0; padding: 1px 0 1px 3px; }
.group { display: flex; padding-right: 3px; border-radius: 4px; background: linear-gradient(#fbfbfc, #d6d8da); }
.group button { width: 30px; height: 30px; display: flex; align-items: center; justify-content: center; }
.group svg { width: 20px; height: 20px; }
.group .on, .modes .on, .pal .on { border: 1px solid #6d8cb4; border-radius: 2px; background: #cfe0f8; }
.ovf { width: 18px; display: flex; align-items: flex-end; padding: 0 0 4px 2px; background: #eaf2fd; }
.ovf svg { width: 10px; height: 10px; }

.workspace { flex: 1; min-height: 0; display: grid; grid-template-columns: 300px minmax(0, 1fr) 225px; padding-bottom: 8px; background: linear-gradient(90deg, #d5d1c8, #f4f3f1); }
.pane { display: flex; flex-direction: column; min-height: 0; border: 1px solid #aaa; border-top: 0; background: #f0f0f0; }
.panehead { height: 22px; flex: none; display: flex; align-items: center; gap: 8px; padding: 0 7px 2px 2px; background: #808080; color: #cbc8a8; border-top: 1px solid #999; }
.panehead h2 { flex: 1; }
.panehead svg { width: 12px; height: 12px; }

.browser { border-right-color: #ddd; }
.treebox { flex: 1; margin: 4px 4px 2px; border: 2px solid #808080; border-right: 1px solid #ddd; border-bottom: 1px solid #ddd; background: #fff; font: 13px/18px "Liberation Sans", Arial, sans-serif; }
.filter { height: 29px; display: flex; align-items: center; gap: 8px; padding: 0 8px 0 5px; background: #f0f0f0; border-bottom: 1px solid #999; }
.filter input { flex: 1; min-width: 0; height: 20px; border: 1px solid #777; background: #fff; margin-left: -3px; }
.filter svg { width: 15px; height: 15px; }
.tree { list-style: none; padding: 0; }
.tree li { height: 18px; display: flex; align-items: center; gap: 3px; }
.tree svg { width: 16px; height: 16px; }
.tree span { padding: 0 2px; }
.tree .cur { background: #efefef; }
.l0 { padding-left: 4px; }
.l1 { padding-left: 7px; }
.l2 { padding-left: 26px; }
.box, .stub { flex: none; width: 11px; height: 11px; margin-right: 2px; }
.box { border: 1px solid #888; background: linear-gradient(#2d5bb8, #2d5bb8) center / 7px 1px no-repeat, #fff; }
.plus { background: linear-gradient(#2d5bb8, #2d5bb8) center / 7px 1px no-repeat, linear-gradient(#2d5bb8, #2d5bb8) center / 1px 7px no-repeat, #fff; }
.stub { border-left: 1px dotted #888; border-bottom: 1px dotted #888; height: 10px; width: 6px; margin-left: 5px; align-self: flex-start; }
.lefttabs { height: 25px; flex: none; display: flex; align-items: flex-start; font: 13px/22px "Liberation Mono", monospace; border-top: 1px solid #ddd; color: #000; }
.lefttabs button { display: flex; align-items: center; gap: 6px; height: 23px; padding: 1px 3px 0 4px; border: 1px solid #d6d6d6; border-top: 0; }
.lefttabs .act { height: 24px; background: #fff; padding: 2px 9px 0 7px; border-color: #fff; }
.lefttabs svg { width: 16px; height: 16px; }

.docarea { display: flex; flex-direction: column; min-width: 0; padding: 0 7px 0 8px; }
.doctabs { height: 24px; flex: none; display: flex; align-items: center; padding: 1px 7px 0 16px; }
.doctab { position: relative; z-index: 0; height: 23px; padding: 0 9px 2px 16px; border-top: 1px solid #808080; border-right: 1px solid #808080; border-radius: 0 4px 0 0; }
.doctab::before { content: ""; position: absolute; z-index: -1; inset: -1px auto 0 -6px; width: 20px; border-left: 1px solid #808080; border-top: 1px solid #808080; border-radius: 4px 0 0 0; transform: skewX(-25deg); }
.doctab.act { font-weight: bold; background: #fff; border-color: #fff; padding: 0 7px 2px 16px; }
.doctab.act::before { background: #fff; border-color: #fff; }
.doctabs svg { width: 12px; height: 12px; margin-left: 10px; }
.frame { flex: 1; min-height: 0; display: flex; padding: 2px; border: 1px solid #808080; border-radius: 6px; background: #d4d0c8; }
.frame-in { flex: 1; min-width: 0; display: grid; grid-template: minmax(0, 1fr) 21px / minmax(0, 1fr) 20px; border: 3px solid #808080; border-bottom-width: 2px; background: #f0f0f0; }
.canvas { position: relative; overflow: hidden; background: #fff; }
.vline { position: absolute; top: 0; bottom: 0; width: 1px; background: #000; }
.v1 { left: 359px; } .v2 { left: 1215px; }
.hline { position: absolute; left: 0; right: 0; top: 605px; height: 1px; background: #000; }
.entity { position: absolute; border: 1px solid #0080c0; background: linear-gradient(155deg, #fff, #b0d4fc); font: 12px/15px "Liberation Mono", monospace; color: #000; padding-bottom: 2px; }
.entity h3 { height: 20px; line-height: 20px; text-align: center; border-bottom: 1px solid #0080c0; }
.entity table { width: 100%; table-layout: fixed; border-collapse: collapse; margin: 3px 0 0 5px; }
.entity td { height: 15px; padding: 0; white-space: nowrap; }
.c66 { width: 66px; } .c94 { width: 94px; } .c96 { width: 96px; } .c101 { width: 101px; } .c109 { width: 109px; }
.e1 { left: 564px; top: -14px; width: 231px; padding-bottom: 15px; }
.e2 { left: 867px; top: -2px; width: 209px; }
.e3 { left: 981px; top: 204px; width: 252px; }
.e4 { left: 877px; top: 450px; width: 239px; }
.vscroll, .hscroll { display: flex; align-items: center; justify-content: space-between; background: #f0f0f0; color: #555; }
.vscroll { flex-direction: column; padding: 4px 0; }
.vscroll svg, .hscroll svg { width: 14px; height: 14px; }
.vscroll .thumb { width: 19px; height: 20px; margin-top: 13px; background: #cdcdcd; }
.hscroll { padding: 0 4px 2px 3px; }

.toolbox .tools { flex: 1; margin: 2px 3px 3px 2px; background: linear-gradient(90deg, #ecf1f7, #fff); }
.modes { height: 37px; display: flex; align-items: center; gap: 2px; padding: 0 0 3px 1px; background: linear-gradient(#fdfdfd, #d4d5d6); }
.modes button { width: 30px; height: 30px; display: flex; align-items: center; justify-content: center; }
.modes svg, .pal svg { width: 20px; height: 20px; }
.tools h3 { height: 26px; display: flex; align-items: center; gap: 5px; padding: 0 0 2px 1px; border-top: 1px solid #ccc; border-radius: 4px 4px 0 0; background: #ececec; color: #000; }
.tools h3 svg { width: 24px; height: 24px; }
.pal { display: grid; grid-template-columns: repeat(6, 32px); grid-auto-rows: 32px; padding-bottom: 1px; }
.pal button { display: flex; align-items: center; justify-content: center; width: 30px; height: 30px; }
.sym svg { fill: url(#gBlue); stroke: #3a48c0; stroke-width: 1.300; overflow: visible; }
.free svg { stroke: #5576b4; }

.output { height: 250px; flex: none; display: flex; flex-direction: column; border: 1px solid #aaa; border-width: 0 1px 1px; background: #f0f0f0; }
.outbody { flex: 1; display: flex; }
.outtext { flex: 1; background: #fff; }
.vscroll.full { width: 20px; padding: 2px 0 3px; gap: 3px; }
.full .thumb { flex: 1; background: #cdcdcd; align-self: stretch; width: auto; height: auto; margin: 0; }
.outfoot { height: 21px; display: flex; }
.outtabs { width: 897px; display: flex; background: #c8c8c8; border-top: 1px solid #333; border-right: 1px solid #555; font: 14px/19px "Liberation Sans", Arial, sans-serif; color: #000; }
.nav { width: 21px; display: flex; align-items: center; justify-content: center; background: #f0f0f0; border: 1px solid #888; border-color: #fff #222 #222 #fff; }
.nav svg { width: 12px; height: 12px; }
.otab { position: relative; z-index: 0; padding: 0 7px 1px 8px; height: 20px; }
.nav + .otab { margin-left: 2px; }
.otab::before, .otab::after { content: ""; position: absolute; z-index: -1; top: 0; bottom: 0; width: 55%; background: #f0f0f0; border-bottom: 1px solid #777; }
.otab::before { left: 2px; border-left: 1px solid #444; transform: skewX(18deg); }
.otab::after { right: 2px; border-right: 1px solid #444; transform: skewX(-18deg); }
.otab.act { z-index: 1; }
.otab.act::before, .otab.act::after { background: #fff; top: -1px; }
.hscroll.full { flex: 1; padding: 0 5px 0 3px; gap: 4px; margin-left: 2px; }
.grip { width: 18px; height: 20px; }

.status { position: relative; height: 37px; flex: none; display: flex; align-items: center; justify-content: space-between; padding: 0 15px 0 16px; background: linear-gradient(#fbfcfd, #d6d8da); border-top: 1px solid #999; }
.dbms { border: 1px solid #777; height: 30px; line-height: 28px; width: 184px; text-align: center; }
.mark { position: absolute; right: 9px; top: 9px; font: 16px/20px "Liberation Sans", Arial, sans-serif; color: rgba(255, 255, 255, .7); text-shadow: 1px 1px 1px rgba(120, 120, 120, .35); }
.taskedge { height: 2px; flex: none; background: #2b2d33; }

.dialog { position: absolute; left: 574px; top: 294px; width: 772px; display: flex; flex-direction: column; background: #f0f0f0; border: 1px solid #666; box-shadow: 0 4px 16px rgba(0, 0, 0, .4); font: 13px/18px "Liberation Sans", Arial, "Noto Sans CJK SC", sans-serif; color: #000; }
.dtitle { height: 31px; display: flex; align-items: center; background: #fff; padding: 0 23px 0 3px; gap: 45px; font: 15px/20px "Open Sans", sans-serif; }
.dtitle h2 { flex: 1; }
.dtitle svg { width: 14px; height: 14px; }
.dtabs { height: 37px; display: flex; align-items: flex-end; padding-left: 9px; font: 15px/20px "Open Sans", sans-serif; }
.dtabs button { height: 25px; padding: 0 7px; border: 1px solid #dcdcdc; border-left: 0; border-bottom: 0; }
.dtabs .act { height: 28px; width: 73px; margin-bottom: -1px; background: #fff; border-left: 1px solid #dcdcdc; padding-bottom: 4px; position: relative; }
.dtabs :nth-child(2), .dtabs :nth-child(6) { width: 68px; padding: 0 4px; }
.dtabs :nth-child(3) { width: 64px; }
.dtabs :nth-child(4), .dtabs :nth-child(5) { width: 80px; }
.dpane { margin: 0 11px 0 9px; padding: 10px 13px 14px 15px; background: #fff; border: 1px solid #dcdcdc; }
.row { height: 32px; display: flex; align-items: center; gap: 6px; }
.dpane > .row { padding-right: 14px; }
.row label:not(.lab):not(.lab2) { display: flex; align-items: center; gap: 3px; }
.row .lab { width: 114px; flex: none; }
.w174 { width: 174px; } .w158 { width: 158px; }
.dis { color: #777; }
.row input[type="radio"], .row input[type="checkbox"] { appearance: none; flex: none; width: 16px; height: 16px; margin: 0; border: 1px solid #333; background: #fff; position: relative; }
.row input[type="radio"] { border-radius: 50%; }
.row input[type="radio"]:checked { background: radial-gradient(#333 0 5px, #fff 6px); }
.row input[type="checkbox"]:checked::after { content: ""; position: absolute; left: 5px; top: 1px; width: 5px; height: 9px; border: solid #333; border-width: 0 1px 1px 0; transform: rotate(40deg); }
.row .dis input { border-color: #ccc; }
.row .dis input:checked::after { border-color: #bbb; }
.combo { flex: 1; height: 24px; display: flex; align-items: center; border: 1px solid #707070; background: #fff; padding: 0 3px 2px 4px; }
.combo.focus { border-color: #0078d7; }
.combo input { flex: 1; min-width: 0; border: 0; outline: 0; padding: 0; background: none; font: inherit; height: 18px; }
.combo input::selection { background: #0078d7; color: #fff; }
.combo svg, .sel svg { width: 12px; height: 12px; color: #333; }
.sq { width: 25px; height: 25px; flex: none; display: flex; align-items: center; justify-content: center; background: #f0f0f0; border: 1px solid; border-color: #aaa #666 #666 #aaa; box-shadow: inset 1px 1px #fff, inset -1px -1px #aaa; }
.sq svg { width: 12px; height: 12px; }
.dpane hr { border: 0; border-top: 1px solid #999; margin: 8px 0 7px; height: 0; }
fieldset { margin: 39px 0 0; padding: 0 13px 0 11px; border: 1px solid #dcdcdc; height: 92px; }
legend { margin-left: -1px; padding: 0 8px 0 1px; line-height: 20px; }
fieldset .row { margin-top: -2px; height: 35px; gap: 4px; }
.lab2 { width: 104px; flex: none; }
.sel { flex: 1; height: 26px; display: flex; align-items: center; position: relative; background: #e1e1e1; border: 1px solid #adadad; padding: 0 3px 1px 2px; }
.sel select { flex: 1; appearance: none; border: 0; background: none; font: inherit; padding: 0; color: #000; height: 22px; }
.sel .si { width: 16px; height: 16px; margin: 0 3px 0 1px; }
.dbtns { display: flex; justify-content: flex-end; gap: 11px; padding: 12px 9px 10px; }
.dbtns button { width: 111px; height: 34px; background: #e1e1e1; border: 1px solid #adadad; font-size: 15px; line-height: 20px; }
.dbtns .def { border: 2px solid #0078d7; }
.dbtns button:disabled { background: #ccc; border-color: #bfbfbf; color: #838383; }

.notes { position: absolute; left: 0; top: 0; pointer-events: none; color: #ff2412; font: 33px/40px "Noto Sans CJK SC", sans-serif; }
.notes p { position: absolute; white-space: nowrap; }
.n1 { left: 329px; top: 424px; } .n2 { left: 333px; top: 521px; } .n3 { left: 661px; top: 895px; }
```
